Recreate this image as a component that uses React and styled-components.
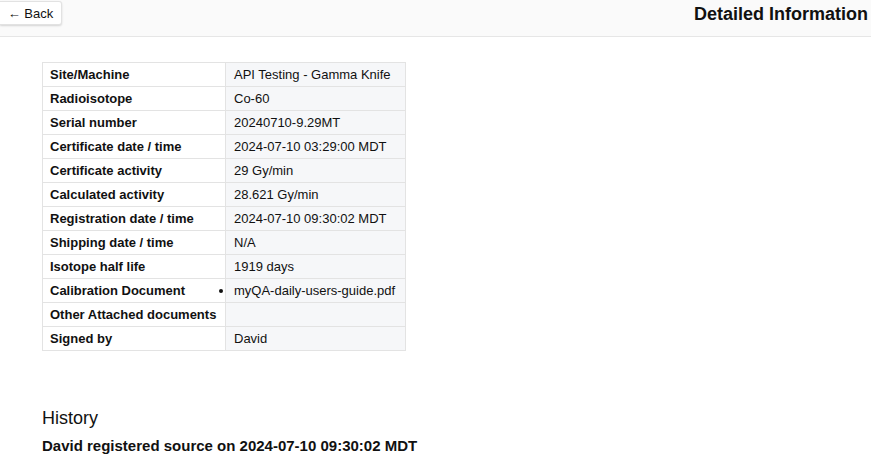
import styled, { createGlobalStyle } from "styled-components";

const GlobalStyle = createGlobalStyle`
  body {
    margin: 0;
    background: #ffffff;
    font-family: "Liberation Sans", Arial, sans-serif;
    color: #111111;
  }
`;

const rows = [
  ["Site/Machine", "API Testing - Gamma Knife"],
  ["Radioisotope", "Co-60"],
  ["Serial number", "20240710-9.29MT"],
  ["Certificate date / time", "2024-07-10 03:29:00 MDT"],
  ["Certificate activity", "29 Gy/min"],
  ["Calculated activity", "28.621 Gy/min"],
  ["Registration date / time", "2024-07-10 09:30:02 MDT"],
  ["Shipping date / time", "N/A"],
  ["Isotope half life", "1919 days"],
  ["Calibration Document", ["myQA-daily-users-guide.pdf"]],
  ["Other Attached documents", ""],
  ["Signed by", "David"],
];

const App = () => {
  return (
    <>
      <GlobalStyle />
      <Header>
        <BackButton>&#8592; Back</BackButton>
        <Title>Detailed Information</Title>
      </Header>
      <Content>
        <InfoTable>
          <tbody>
            {rows.map(([label, value]) => (
              <tr key={label}>
                <LabelCell>{label}</LabelCell>
                <ValueCell>
                  {Array.isArray(value) ? (
                    <DocList>
                      {value.map((doc) => (
                        <li key={doc}>{doc}</li>
                      ))}
                    </DocList>
                  ) : (
                    value
                  )}
                </ValueCell>
              </tr>
            ))}
          </tbody>
        </InfoTable>
        <HistoryTitle>History</HistoryTitle>
        <HistoryItem>David registered source on 2024-07-10 09:30:02 MDT</HistoryItem>
      </Content>
    </>
  );
};

const Header = styled.div`
  display: flex;
  justify-content: space-between;
  align-items: flex-start;
  height: 37px;
  box-sizing: border-box;
  padding: 1px 3px 0 0;
  background: #fafafa;
  border-bottom: 1px solid #e6e6e6;
`;

const BackButton = styled.button`
  width: 62px;
  height: 24px;
  padding: 0;
  background: #ffffff;
  border: 1px solid #e2e2e2;
  border-left: none;
  border-radius: 0 3px 3px 0;
  box-shadow: 0 1px 2px rgba(0, 0, 0, 0.15);
  font-family: "Liberation Sans", Arial, sans-serif;
  font-size: 13px;
  color: #111111;
  cursor: pointer;
`;

const Title = styled.h1`
  margin: 2px 0 0;
  font-size: 18px;
  line-height: 22px;
  font-weight: bold;
  color: #111111;
`;

const Content = styled.div`
  padding: 25px 42px 0;
`;

const InfoTable = styled.table`
  border-collapse: collapse;
  font-size: 13px;
`;

const LabelCell = styled.td`
  width: 168px;
  height: 23px;
  padding: 0 7px 0 7px;
  border: 1px solid #e3e3e3;
  background: #ffffff;
  font-weight: bold;
  white-space: nowrap;
`;

const ValueCell = styled.td`
  width: 163px;
  height: 23px;
  padding: 0 8px;
  border: 1px solid #e3e3e3;
  background: #f6f7f9;
  white-space: nowrap;
`;

const DocList = styled.ul`
  margin: 0;
  padding: 0;
  list-style: disc outside;
`;

const HistoryTitle = styled.h2`
  margin: 55px 0 0;
  font-size: 18px;
  line-height: 24px;
  font-weight: normal;
`;

const HistoryItem = styled.p`
  margin: 7px 0 0;
  font-size: 15px;
  line-height: 18px;
  font-weight: bold;
`;

export default App;
